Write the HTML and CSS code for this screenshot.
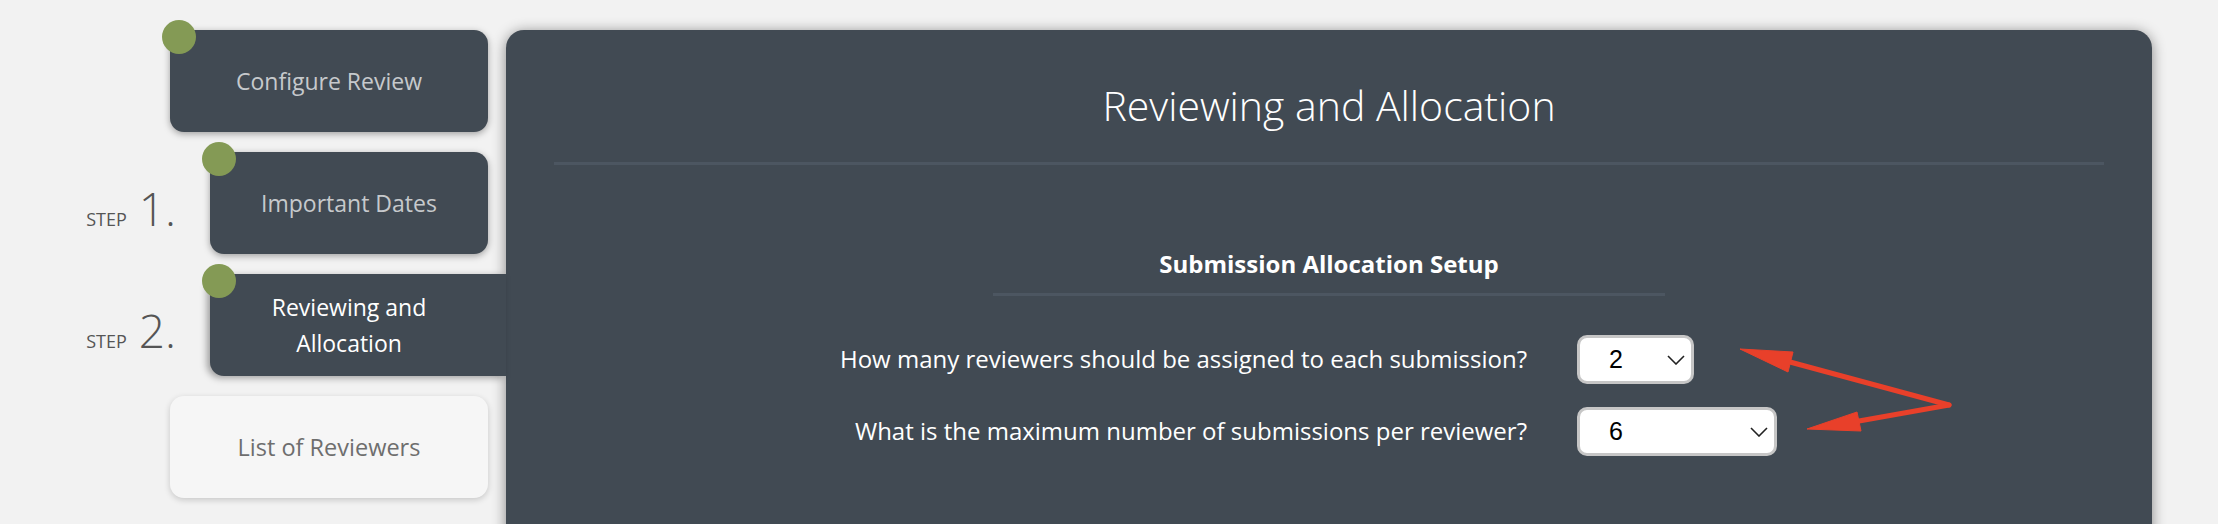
FILE: index.html
```html
<!DOCTYPE html>
<html>
<head>
	<meta charset="utf-8">
	<title>Reviewing and Allocation</title>
	<link rel="stylesheet" href="styles.css">
</head>
<body>
    <div class="wizard">
        <div class="steps">
            <div class="step-row">
                <div class="tab done"><span class="dot"></span>Configure Review</div>
            </div>
            <div class="step-row">
                <div class="step-label"><span class="step-word">step</span><span class="step-num">1.</span></div>
                <div class="tab done narrow"><span class="dot"></span>Important Dates</div>
            </div>
            <div class="step-row">
                <div class="step-label"><span class="step-word">step</span><span class="step-num">2.</span></div>
                <div class="tab current narrow"><span class="dot"></span>Reviewing and Allocation</div>
            </div>
            <div class="step-row">
                <div class="tab todo">List of Reviewers</div>
            </div>
        </div>

        <div class="panel">
            <h1 class="panel-title">Reviewing and Allocation</h1>
            <hr class="rule">

            <h2 class="section-title">Submission Allocation Setup</h2>
            <hr class="rule short">

            <div class="form">
                <label class="question" for="perSub">How many reviewers should be assigned to each submission?</label>
                <div class="select small">
                    <select id="perSub">
                        <option>1</option>
                        <option selected>2</option>
                        <option>3</option>
                        <option>4</option>
                    </select>
                    <svg class="chevron" width="18" height="10" viewBox="0 0 18 10"><path d="M1 1 L9 9 L17 1" fill="none" stroke="#222" stroke-width="1.6"/></svg>
                </div>

                <label class="question" for="perRev">What is the maximum number of submissions per reviewer?</label>
                <div class="select wide">
                    <select id="perRev">
                        <option>4</option>
                        <option>5</option>
                        <option selected>6</option>
                        <option>8</option>
                        <option>10</option>
                    </select>
                    <svg class="chevron" width="18" height="10" viewBox="0 0 18 10"><path d="M1 1 L9 9 L17 1" fill="none" stroke="#222" stroke-width="1.6"/></svg>
                </div>
            </div>
        </div>
    </div>

    <!-- annotation arrows drawn over the screenshot -->
    <svg class="marks" width="2218" height="524" viewBox="0 0 2218 524">
        <g fill="#e8402a" stroke="#e8402a" stroke-linejoin="round">
            <line x1="1949" y1="405" x2="1790" y2="362" stroke-width="5" stroke-linecap="round"/>
            <polygon points="1740,349 1793,352 1788,372" stroke-width="1"/>
            <line x1="1949" y1="405" x2="1859" y2="421" stroke-width="5" stroke-linecap="round"/>
            <polygon points="1807,429 1857,412 1861,431" stroke-width="1"/>
        </g>
    </svg>
</body>
</html>
```

FILE: styles.css
```css
html, body {
    margin: 0;
    overflow: hidden;
}

body {
    background: #f2f2f2;
    font-family: "Open Sans", "Liberation Sans", sans-serif;
}

.wizard {
    display: flex;
    align-items: flex-start;
    padding-top: 30px;
}

/* left column */
.steps {
    width: 488px;
    margin-right: 18px;
    display: flex;
    flex-direction: column;
    gap: 20px;
}

.step-row {
    display: flex;
    justify-content: flex-end;
    align-items: flex-start;
}

.step-label {
    display: flex;
    align-items: baseline;
    margin-top: 33px;
    margin-right: 34px;
    color: #555;
}

.step-word {
    font-size: 18px;
    text-transform: uppercase;
    margin-right: 12px;
}

.step-num {
    font-size: 46px;
    font-weight: 300;
    line-height: 1;
}

.tab {
    position: relative;
    box-sizing: border-box;
    width: 318px;
    height: 102px;
    padding: 0 40px;
    display: flex;
    align-items: center;
    justify-content: center;
    text-align: center;
    font-size: 23px;
    line-height: 36px;
    border-radius: 14px;
    box-shadow: 0 2px 7px rgba(0, 0, 0, .35);
}

.tab.narrow {
    width: 278px;
}

.tab.done {
    background: #414a53;
    color: #c6c9cc;
}

.tab.current {
    width: 296px;
    margin-right: -18px;
    padding-right: 58px;
    background: #414a53;
    color: #fff;
    border-radius: 14px 0 0 14px;
    z-index: 2;
    box-shadow: -3px 2px 7px rgba(0, 0, 0, .35);
}

.tab.todo {
    background: #f6f6f6;
    color: #6e6e6e;
    font-size: 23.5px;
    box-shadow: 0 2px 6px rgba(0, 0, 0, .18);
}

.dot {
    position: absolute;
    left: -8px;
    top: -10px;
    width: 34px;
    height: 34px;
    border-radius: 50%;
    background: #849a55;
}

/* main card */
.panel {
    position: relative;
    z-index: 1;
    box-sizing: border-box;
    width: 1646px;
    min-height: 560px;
    padding: 51px 48px 0;
    background: #414a53;
    border-radius: 18px;
    box-shadow: 0 2px 14px rgba(0, 0, 0, .45);
    color: #fff;
}

.panel-title {
    margin: 0;
    text-align: center;
    font-size: 41px;
    font-weight: 300;
    line-height: 1.2;
}

.rule {
    margin: 32px 0 0;
    height: 3px;
    border: 0;
    background: #4c5661;
}

.rule.short {
    width: 672px;
    margin: 14px auto 0;
}

.section-title {
    margin: 85px 0 0;
    text-align: center;
    font-size: 24px;
    font-weight: 700;
    line-height: 1.2;
}

.form {
    display: grid;
    grid-template-columns: 973px auto;
    column-gap: 50px;
    row-gap: 23px;
    align-items: center;
    margin-top: 39px;
}

.question {
    text-align: right;
    font-size: 24px;
    line-height: 1.2;
}

.select {
    position: relative;
    height: 49px;
}

.select.small {
    width: 117px;
}

.select.wide {
    width: 200px;
}

.select select {
    appearance: none;
    -webkit-appearance: none;
    box-sizing: border-box;
    width: 100%;
    height: 100%;
    margin: 0;
    padding: 0 0 0 29px;
    border: 3px solid #c6c6c6;
    border-radius: 10px;
    background: #fff;
    color: #000;
    font-family: "Liberation Sans", Arial, sans-serif;
    font-size: 25px;
}

.chevron {
    position: absolute;
    right: 9px;
    top: 20px;
    pointer-events: none;
}

.marks {
    position: absolute;
    left: 0;
    top: 0;
    z-index: 5;
    pointer-events: none;
}
```
